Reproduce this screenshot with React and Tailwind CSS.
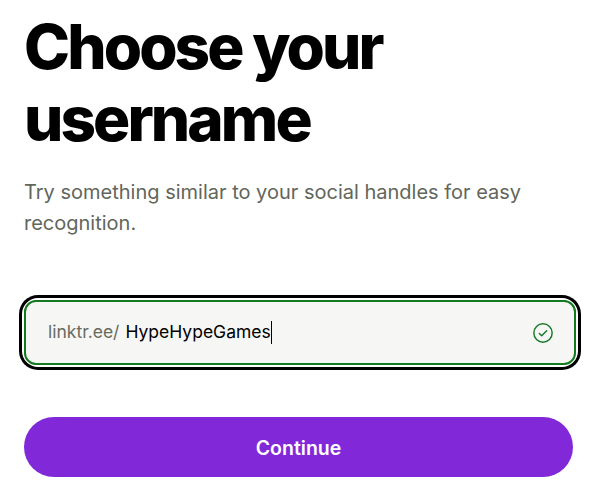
import React from 'react';

function CheckCircle() {
  return (
    <svg width="22" height="22" viewBox="0 0 24 24" fill="none" stroke="#1a7a2a" strokeWidth="1.6" strokeLinecap="round" strokeLinejoin="round">
      <circle cx="12" cy="12" r="10" />
      <path d="M8 12.5l2.6 2.6L16 9.6" />
    </svg>
  );
}

export default function App() {
  return (
    <div className="w-[600px] h-[488px] bg-white px-6 pt-[11px] font-['Inter',sans-serif] overflow-hidden">
      <h1 className="text-[62px] leading-[72px] font-extrabold tracking-[-0.047em] text-black">
        Choose your<br />username
      </h1>
      <p className="mt-[22px] text-[20px] leading-[31px] text-[#62665b]">
        Try something similar to your social handles for easy recognition.
      </p>

      <div className="mt-[61px] rounded-[14px] ring-[3px] ring-black ring-offset-2 ring-offset-white">
        <div className="flex items-center h-[65px] rounded-[12px] border-2 border-[#137a1f] bg-[#f6f7f5] pl-[22px] pr-[20px]">
          <span className="text-[17.5px] text-[#676b5f]">linktr.ee/</span>
          <span className="ml-[6px] text-[17.5px] text-black">HypeHypeGames</span>
          <span className="w-[1.5px] h-[23px] bg-black"></span>
          <span className="ml-auto"><CheckCircle /></span>
        </div>
      </div>

      <button className="mt-[52px] w-[549px] h-[60px] rounded-full bg-[#8129d9] text-white text-[19.5px] font-semibold pt-[3px]">
        Continue
      </button>
    </div>
  );
}
